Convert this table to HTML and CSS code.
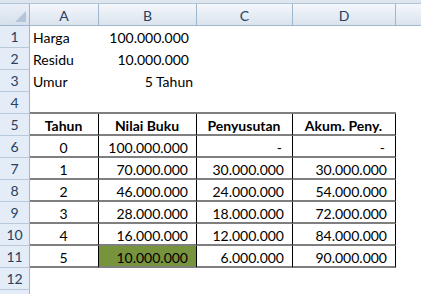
FILE: index.html
```html
<!DOCTYPE html>
<html>
<head>
<meta charset="utf-8">
<link rel="stylesheet" href="styles.css">
</head>
<body>
<div class="strip"></div>
<div class="sheet">
  <div class="corner"><span class="tri"></span></div>
  <div class="ch">A</div><div class="ch">B</div><div class="ch">C</div><div class="ch">D</div><div class="ch last"></div>

  <div class="rh">1</div><div class="c l">Harga</div><div class="c r">100.000.000</div><div class="c"></div><div class="c"></div><div class="c"></div>
  <div class="rh">2</div><div class="c l">Residu</div><div class="c r">10.000.000</div><div class="c"></div><div class="c"></div><div class="c"></div>
  <div class="rh">3</div><div class="c l">Umur</div><div class="c r tight">5 Tahun</div><div class="c"></div><div class="c"></div><div class="c"></div>
  <div class="rh">4</div><div class="c above"></div><div class="c above"></div><div class="c above"></div><div class="c above"></div><div class="c"></div>

  <div class="rh">5</div><div class="c t m b">Tahun</div><div class="c t m b">Nilai Buku</div><div class="c t m b">Penyusutan</div><div class="c t m b">Akum. Peny.</div><div class="c"></div>
  <div class="rh">6</div><div class="c t m">0</div><div class="c t r">100.000.000</div><div class="c t r dash">-</div><div class="c t r dash">-</div><div class="c"></div>
  <div class="rh">7</div><div class="c t m">1</div><div class="c t r">70.000.000</div><div class="c t r">30.000.000</div><div class="c t r">30.000.000</div><div class="c"></div>
  <div class="rh">8</div><div class="c t m">2</div><div class="c t r">46.000.000</div><div class="c t r">24.000.000</div><div class="c t r">54.000.000</div><div class="c"></div>
  <div class="rh">9</div><div class="c t m">3</div><div class="c t r">28.000.000</div><div class="c t r">18.000.000</div><div class="c t r">72.000.000</div><div class="c"></div>
  <div class="rh">10</div><div class="c t m">4</div><div class="c t r">16.000.000</div><div class="c t r">12.000.000</div><div class="c t r">84.000.000</div><div class="c"></div>
  <div class="rh">11</div><div class="c t m">5</div><div class="c t r green">10.000.000</div><div class="c t r">6.000.000</div><div class="c t r">90.000.000</div><div class="c"></div>
  <div class="rh">12</div><div class="c"></div><div class="c"></div><div class="c"></div><div class="c"></div><div class="c"></div>
  <div class="rh"></div><div class="c"></div><div class="c"></div><div class="c"></div><div class="c"></div><div class="c"></div>
</div>
</body>
</html>
```

FILE: styles.css
```css
* { box-sizing: border-box; }
html, body { margin: 0; padding: 0; background: #fff; overflow: hidden; }
body {
  width: 421px;
  height: 294px;
  font-family: Lato, "Open Sans", sans-serif;
  font-size: 14px;
  color: #000;
}
.strip {
  height: 4px;
  background: #dde5ef;
  border-bottom: 1px solid #b3c3d6;
}
.sheet {
  display: grid;
  grid-template-columns: 30px 69px 98px 96px 103px 40px;
  grid-template-rows: 22px repeat(12, 22px) 6px;
  height: 290px;
  overflow: hidden;
}
.corner {
  position: relative;
  background: linear-gradient(#eaf0f8, #d6e0ec);
  border-right: 1px solid #9eb6ce;
  border-bottom: 1px solid #9eb6ce;
}
.tri {
  position: absolute;
  right: 3px;
  bottom: 3px;
  width: 0;
  height: 0;
  border-left: 11px solid transparent;
  border-bottom: 11px solid #b4c5da;
}
.ch {
  background: linear-gradient(#f4f7fb, #dbe3ed);
  border-right: 1px solid #9eb6ce;
  border-bottom: 1px solid #9eb6ce;
  color: #27415f;
  display: flex;
  align-items: center;
  justify-content: center;
  padding-top: 1px;
}
.rh {
  background: #e4ecf7;
  border-right: 1px solid #9eb6ce;
  border-bottom: 1px solid #b9c9dc;
  color: #27415f;
  display: flex;
  align-items: flex-end;
  justify-content: center;
  padding-bottom: 2px;
  line-height: 17px;
}
.c {
  display: flex;
  align-items: flex-end;
  padding: 0 4px 2px 3px;
  line-height: 17px;
  white-space: nowrap;
}
.l { justify-content: flex-start; }
.r { justify-content: flex-end; padding-right: 8px; }
.r.tight { padding-right: 4px; }
.r.dash { padding-right: 10px; }
.m { justify-content: center; padding-left: 0; padding-right: 1px; }
.b { font-weight: 700; }
.above { border-bottom: 2px solid #7f7f7f; }
.t {
  border-right: 1px solid #000;
  border-bottom: 2px solid #7f7f7f;
  padding-bottom: 0;
}
.green { background: #77933c; }
```
